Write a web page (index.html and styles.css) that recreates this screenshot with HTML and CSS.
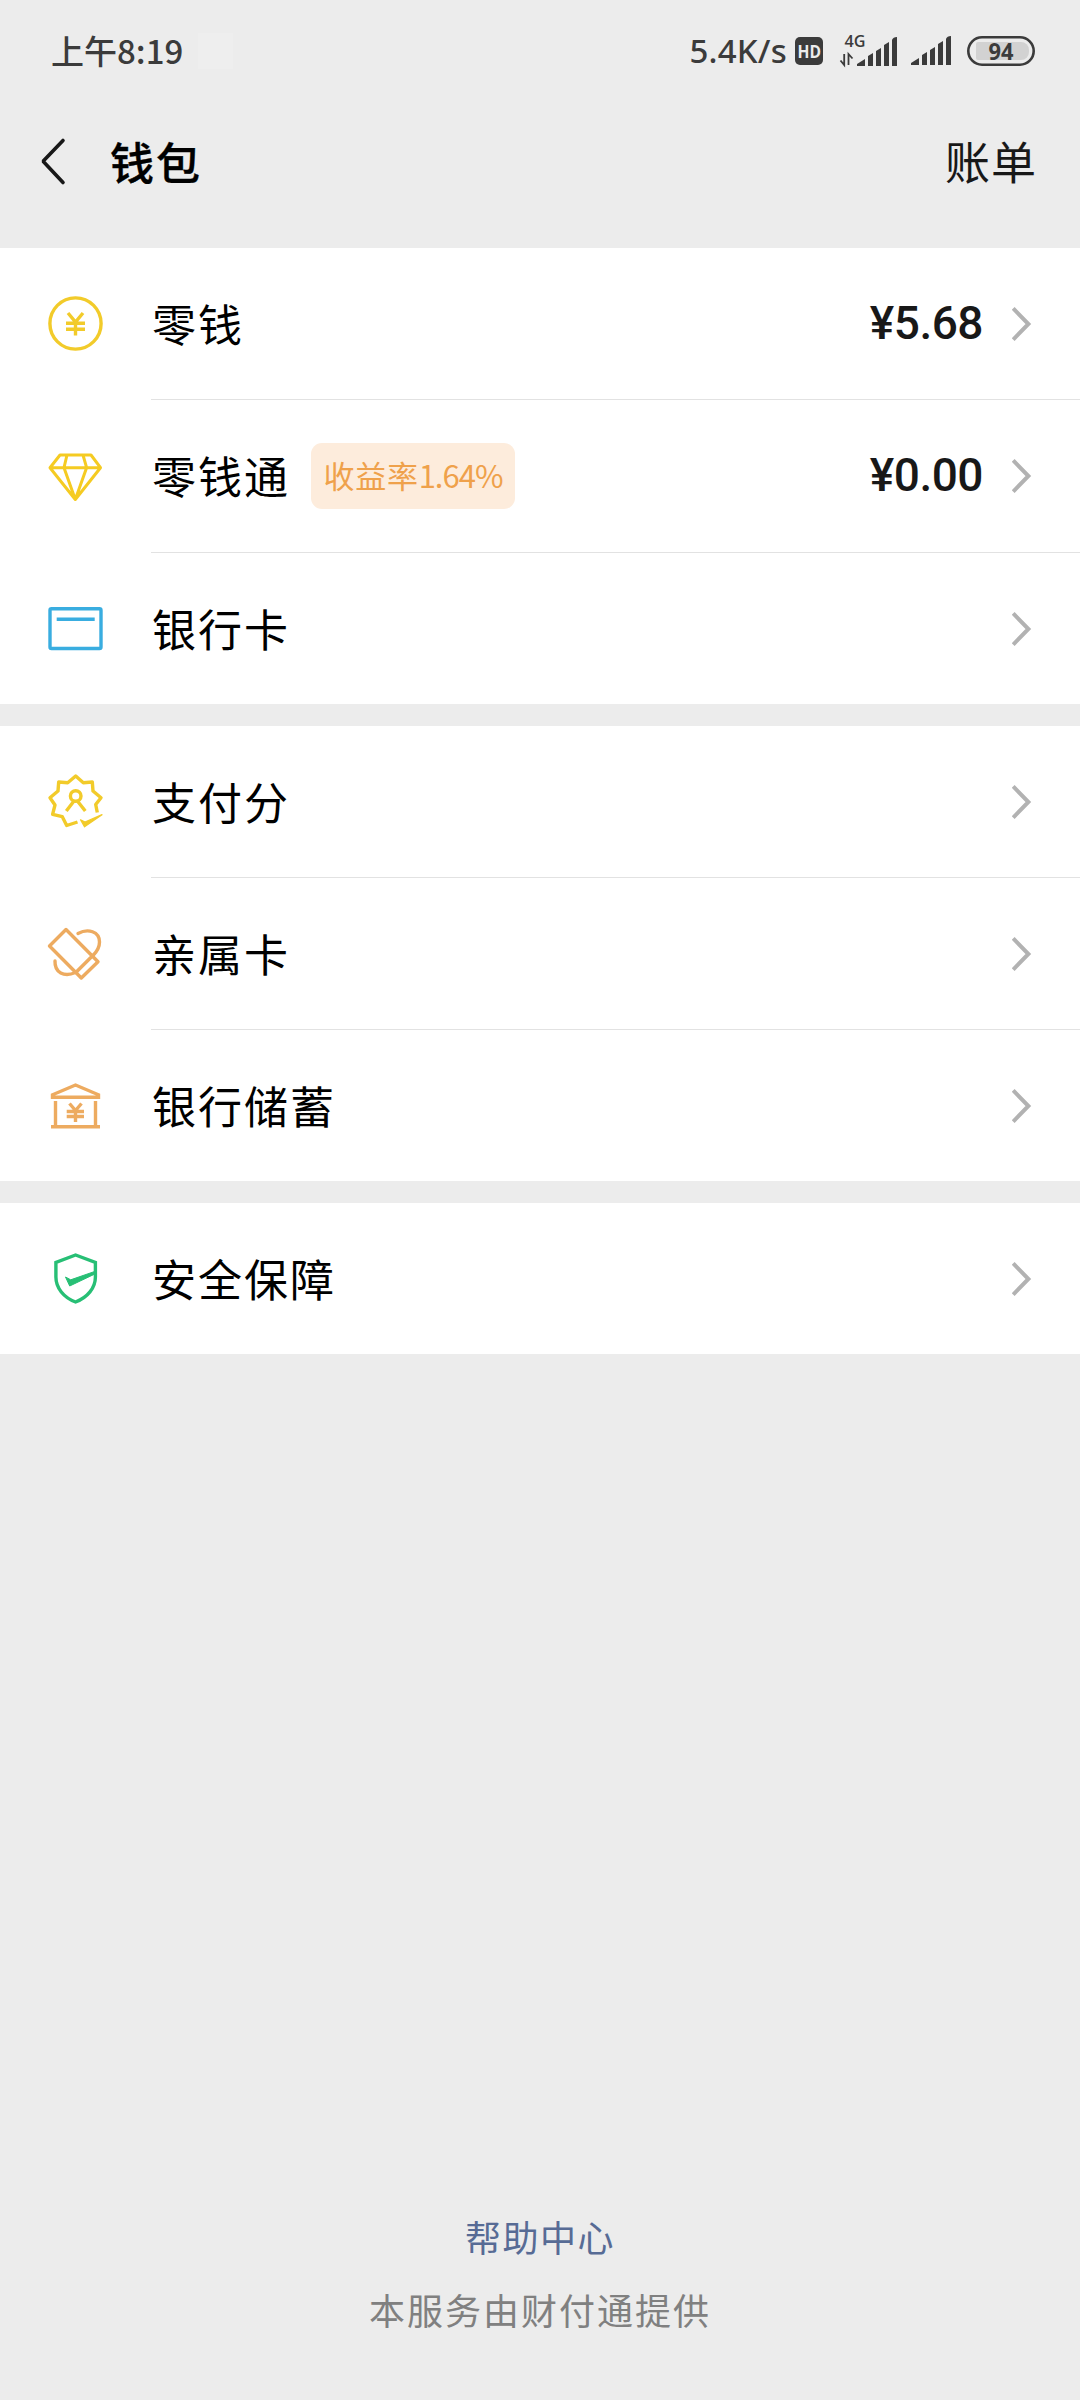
FILE: index.html
```html
<!DOCTYPE html>
<html lang="zh-CN">
<head>
<meta charset="utf-8">
<title>钱包</title>
<link rel="stylesheet" href="styles.css">
</head>
<body>
<svg class="defs" width="0" height="0">
  <symbol id="chevron" viewBox="0 0 20 36"><path d="M1.2 2.4 16.4 18 1.2 33.600" fill="none" stroke="#b2b2b2" stroke-width="4"/></symbol>
  <symbol id="bars" viewBox="0 0 40 30"><path d="M0 29V27L8 22V29ZM11 29V19L16 16V29ZM19 29V14L24 11V29ZM27 29V8L32 5V29ZM35 29V3Q36 0 40 0V29Z" fill="#3b3b3b"/></symbol>
</svg>
<header class="status">
  <span class="clock">上午8:19</span>
  <span class="patch"></span>
  <span class="speed">5.4K/s</span>
  <svg class="hd" viewBox="0 0 28 28"><rect width="28" height="28" rx="5" fill="#3b3b3b"/><text x="2.5" y="21" textLength="23.500" lengthAdjust="spacingAndGlyphs" class="hd-text">HD</text></svg>
  <svg class="net" viewBox="0 0 57 32"><text x="4.5" y="12.500" textLength="21" lengthAdjust="spacingAndGlyphs" class="net-text">4G</text><path d="M4.2 20V31L.5 26.5M8.5 31V20L12.5 24.500" fill="none" stroke="#3b3b3b" stroke-width="1.8"/><use href="#bars" x="17" y="3" width="40" height="30"/></svg>
  <svg class="signal"><use href="#bars" width="40" height="30"/></svg>
  <svg class="battery" viewBox="0 0 68 30"><rect x="1.3" y="1.3" width="65.4" height="27.4" rx="13.7" fill="#ececec" stroke="#3b3b3b" stroke-width="2.6"/><rect x="9" y="6" width="53" height="18" rx="8" fill="#d2d2d2"/><rect x="9" y="6" width="15" height="18" rx="2" fill="#d2d2d2"/><text x="21.5" y="24" textLength="25" lengthAdjust="spacingAndGlyphs" class="battery-text">94</text></svg>
</header>
<nav class="nav">
  <svg class="back" viewBox="0 0 26 48"><path d="M23 2.500 3.100 23.300 23 44.500" fill="none" stroke="#181818" stroke-width="3.6" stroke-linecap="round" stroke-linejoin="bevel"/></svg>
  <h1 class="title">钱包</h1>
  <span class="bill">账单</span>
</nav>
<main>
  <section class="group">
    <div class="row">
      <svg class="icon" viewBox="0 0 60 60" stroke="#f2cb2a"><circle cx="30.500" cy="30.500" r="25.600"/><path d="M23 20 30.500 29 38 20M21 30.300H40M21 36.300H40M30.500 28V42.500"/></svg>
      <div class="cell"><span class="label">零钱</span><span class="amount">¥5.68</span><svg class="chevron"><use href="#chevron"/></svg></div>
    </div>
    <div class="row row-tall">
      <svg class="icon" viewBox="0 0 60 60" stroke="#f5cb22" stroke-linejoin="round"><path d="M15 10H46L55.500 22.700 30.300 54.500 5 22.700ZM5 22.700H55.500M22 10 19 22.700 30.300 54.500 41.600 22.700 38 10" stroke-width="3"/></svg>
      <div class="cell"><span class="label">零钱通</span><span class="tag">收益率<span class="rate">1.64%</span></span><span class="amount">¥0.00</span><svg class="chevron"><use href="#chevron"/></svg></div>
    </div>
    <div class="row row-last">
      <svg class="icon" viewBox="0 0 60 60" stroke="#39ade0"><rect x="5" y="10.700" width="51" height="39.800" rx="1.500"/><path d="M11.700 21.300H49.700"/></svg>
      <div class="cell"><span class="label">银行卡</span><svg class="chevron"><use href="#chevron"/></svg></div>
    </div>
  </section>
  <section class="group">
    <div class="row">
      <svg class="icon" viewBox="0 0 60 60" stroke="#f2cb2a" stroke-linejoin="round"><path d="M52.300 41.500 50.700 33.500 56 26.700 48 20 47.300 11 38.300 11.700 30.700 5 22.700 11.700 13.700 11 13 20 5 26.700 10 34 7.600 43.300 17.300 45.700 21.700 54.500 32.500 51"/><circle cx="30.700" cy="25" r="5.300"/><path d="M29 30 21.300 40M32.400 30 40.300 40"/><path d="M35.500 48.800 40 51 57 43.700 39.500 55.800Z" fill="#f2cb2a" stroke-width="1.300"/></svg>
      <div class="cell"><span class="label">支付分</span><svg class="chevron"><use href="#chevron"/></svg></div>
    </div>
    <div class="row">
      <svg class="icon" viewBox="0 0 60 60" stroke="#edab60" stroke-linejoin="round" stroke-linecap="round"><path d="M21 6.500 4.500 23 36.300 55 53 38.700ZM30.800 49.500 47.800 32.500"/><path d="M33 10.500C43 5 54.500 8.500 54.500 19 54.500 24.500 51.500 29 48 32.500M10 38C9.500 49.500 19 54.500 30.500 49.500"/></svg>
      <div class="cell"><span class="label">亲属卡</span><svg class="chevron"><use href="#chevron"/></svg></div>
    </div>
    <div class="row row-last">
      <svg class="icon" viewBox="0 0 60 60" stroke="#edab60"><path d="M7.500 22.200V19.800L30.500 10 53.500 19.800V22.200ZM6 51.800H55M10.500 26V51M50.500 26V51"/><path d="M24.500 28.500 30.500 35.500 36.500 28.500M21.700 36.500H39M21.700 41.500H39M30.500 35V47"/></svg>
      <div class="cell"><span class="label">银行储蓄</span><svg class="chevron"><use href="#chevron"/></svg></div>
    </div>
  </section>
  <section class="group">
    <div class="row row-last">
      <svg class="icon" viewBox="0 0 60 60" stroke="#27bf75"><path d="M30.600 7 50.400 14.500V29C50.400 40 42.500 49.500 30.600 54 18.700 49.500 10.900 40 10.900 29V14.500Z"/><path d="M20.500 29 25.700 31.800 50.500 23.200V25.700L24.700 38Z" fill="#27bf75" stroke-width="1"/></svg>
      <div class="cell"><span class="label">安全保障</span><svg class="chevron"><use href="#chevron"/></svg></div>
    </div>
  </section>
</main>
<footer class="footer">
  <a class="help">帮助中心</a>
  <p class="provider">本服务由财付通提供</p>
</footer>
</body>
</html>
```
FILE: styles.css
```css
* { box-sizing: border-box; }
body {
  margin: 0;
  height: 2400px;
  background: #ececec;
  color: #000;
  font-family: "Noto Sans CJK SC", sans-serif;
  display: flex;
  flex-direction: column;
}
.defs { display: block; flex: none; }
svg { display: block; flex: none; overflow: visible; }

.status {
  height: 102px;
  padding: 0 45px 0 51px;
  display: flex;
  align-items: center;
  color: #3b3b3b;
}
.clock { font-size: 33px; font-weight: 500; line-height: 50px; width: 147px; margin-top: -2px; white-space: nowrap; }
.patch { width: 35px; height: 36px; background: #eee; }
.speed {
  margin-left: auto;
  margin-right: 8px;
  font: 500 33px/50px "Noto Sans", sans-serif;
  letter-spacing: 0.2px;
}
.hd { width: 28px; height: 28px; }
.hd-text { font: 700 18px "Open Sans", sans-serif; fill: #ececec; }
.net { width: 57px; height: 32px; margin: -3px 0 0 17px; }
.net-text { font: 600 16px "Open Sans", sans-serif; fill: #3b3b3b; }
.signal { width: 40px; height: 30px; margin-left: 14px; }
.battery { width: 68px; height: 30px; margin-left: 16px; }
.battery-text { font: 700 24px "Noto Sans", sans-serif; fill: #3b3b3b; }

.nav {
  height: 146px;
  padding: 0 44px 28px 40px;
  display: flex;
  align-items: center;
}
.back { width: 26px; height: 48px; margin-top: 2px; }
.title { margin: 0 0 0 44px; font-size: 44px; font-weight: 500; line-height: 60px; letter-spacing: 2px; -webkit-text-stroke: 0.4px; }
.bill { margin: 0 0 0 auto; font-size: 45px; line-height: 60px; letter-spacing: 1px; margin-right: -1px; color: #181818; }

.group { background: #fff; margin-bottom: 22px; }
.row { height: 152px; display: flex; align-items: stretch; }
.row-tall { height: 153px; }
.row-last { height: 151px; }
.icon {
  width: 60px;
  height: 60px;
  margin: 45px 46px 0 45px;
  fill: none;
  stroke-width: 3.4;
}
.cell {
  flex: 1;
  display: flex;
  align-items: center;
  padding-right: 48px;
  border-bottom: 1px solid #e2e2e2;
}
.row-last .cell { border-bottom: 0; }
.label { margin-left: 1px; padding-bottom: 2px; font-size: 44px; line-height: 64px; letter-spacing: 2px; }
.tag {
  margin-left: 21px;
  width: 204px;
  height: 66px;
  border-radius: 11px;
  background: #fdecdc;
  color: #efa14b;
  font-size: 31px;
  line-height: 64px;
  letter-spacing: 0.7px;
  text-align: center;
  white-space: nowrap;
}
.rate { letter-spacing: -1px; }
.amount {
  margin-left: auto;
  padding-bottom: 2px;
  font: 500 46px/60px Roboto, sans-serif;
  letter-spacing: -0.5px;
  color: #181818;
}
.chevron { width: 20px; height: 36px; margin-left: auto; }
.amount + .chevron { margin-left: 29px; }

.footer {
  margin-top: auto;
  padding-bottom: 64px;
  text-align: center;
  font-size: 36px;
  line-height: 54px;
}
.help { display: block; color: #576b95; letter-spacing: 1.500px; margin-bottom: 19px; }
.provider { margin: 0; color: #808080; letter-spacing: 2px; }
```
